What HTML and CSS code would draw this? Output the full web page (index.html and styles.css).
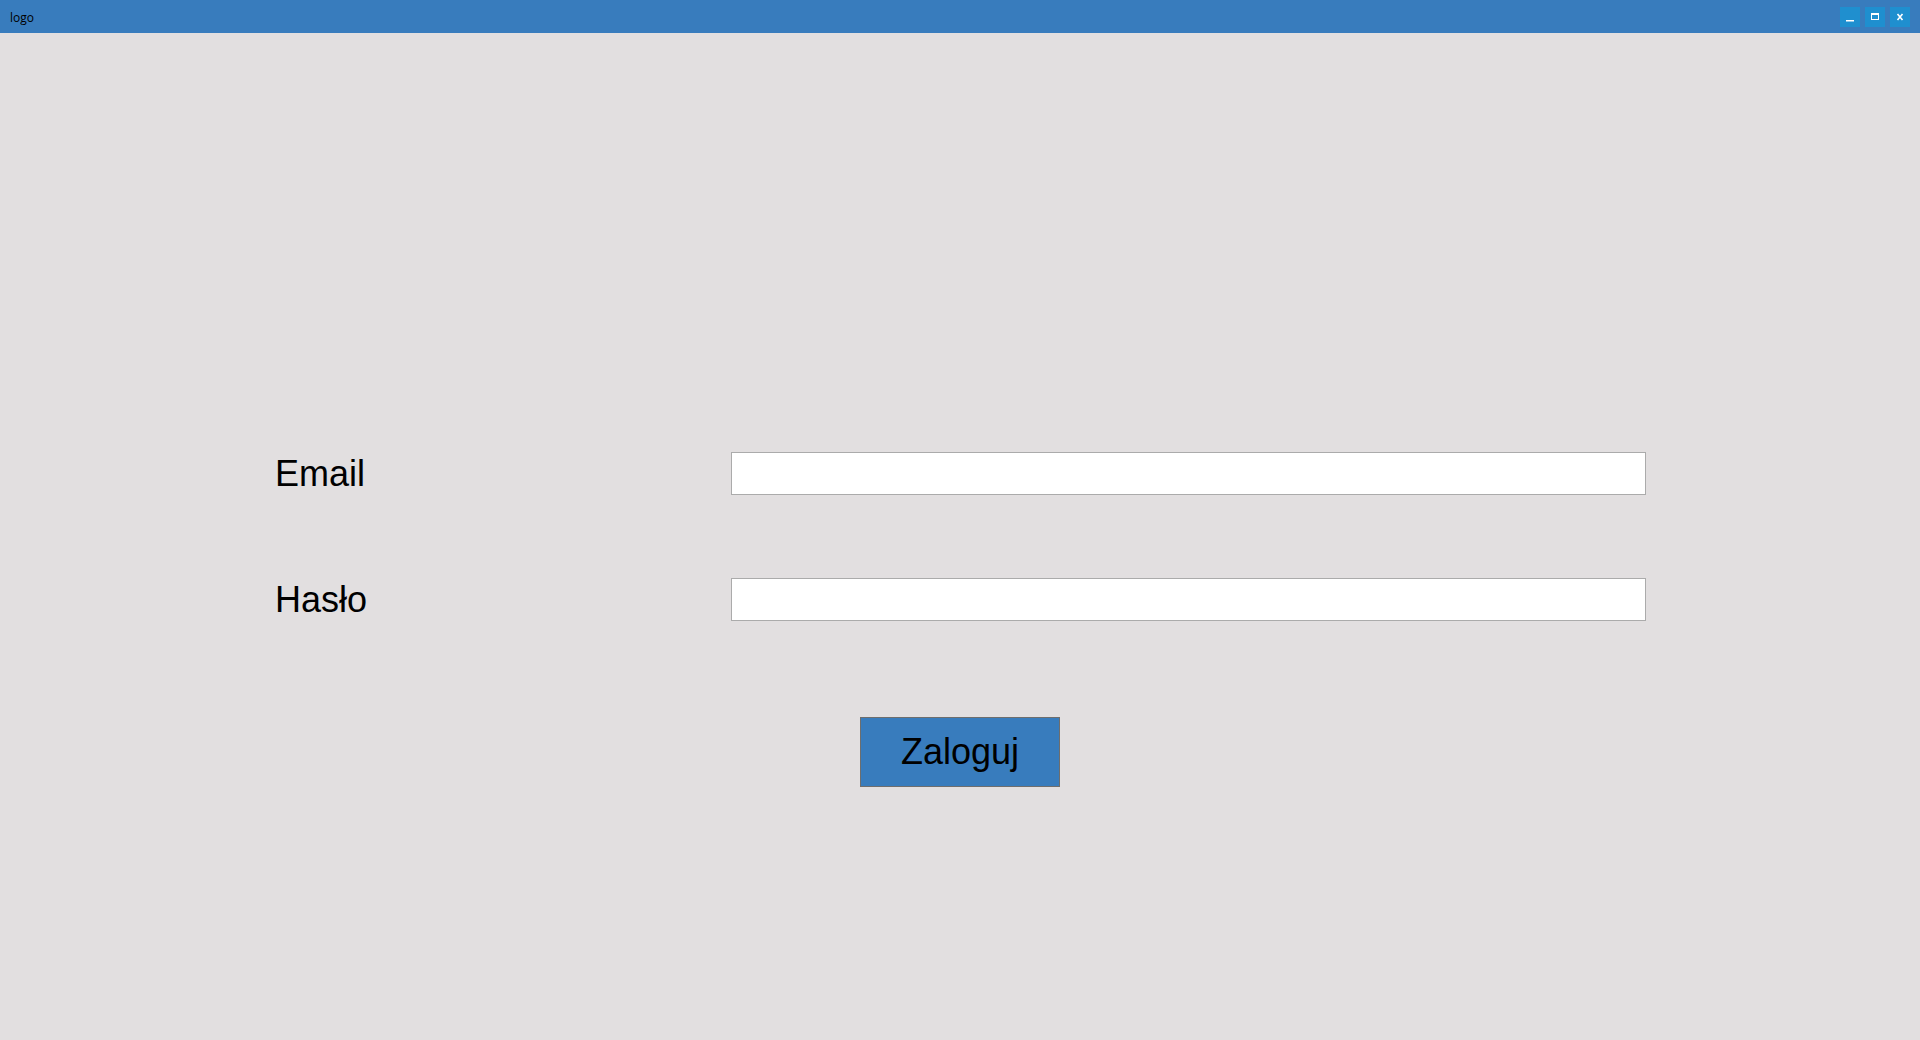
FILE: index.html
```html
<!DOCTYPE html>
<html lang="pl">
<head>
<meta charset="utf-8">
<title>logo</title>
<link rel="stylesheet" href="styles.css">
</head>
<body>
<div class="window">
  <header class="titlebar">
    <span class="title">logo</span>
    <div class="controls">
      <button class="ctl" aria-label="minimize">
        <svg width="20" height="20" viewBox="0 0 20 20"><rect x="6" y="13" width="8" height="1.5" fill="#fff"/></svg>
      </button>
      <button class="ctl" aria-label="maximize">
        <svg width="20" height="20" viewBox="0 0 20 20"><rect x="6.5" y="6.5" width="7" height="6" fill="none" stroke="#fff" stroke-width="1"/><rect x="6" y="6" width="8" height="2" fill="#fff"/></svg>
      </button>
      <button class="ctl" aria-label="close">
        <svg width="20" height="20" viewBox="0 0 20 20"><path d="M7.5 7 L12.5 13 M12.5 7 L7.5 13" stroke="#fff" stroke-width="1.6" fill="none"/></svg>
      </button>
    </div>
  </header>
  <main class="content">
    <form class="login">
      <div class="fields">
        <label class="label" for="email">Email</label>
        <input class="input" id="email" type="text">
        <label class="label" for="haslo">Hasło</label>
        <input class="input" id="haslo" type="password">
      </div>
      <div class="actions">
        <button type="button" class="submit">Zaloguj</button>
      </div>
    </form>
  </main>
</div>
</body>
</html>
```
FILE: styles.css
```css
html, body {
  margin: 0;
  padding: 0;
  height: 100%;
}
body {
  background: #e2dfe0;
  font-family: "Liberation Sans", Arial, sans-serif;
  overflow: hidden;
}
.window {
  display: flex;
  flex-direction: column;
  height: 100%;
}
.titlebar {
  height: 33px;
  background: #387cbd;
  display: flex;
  align-items: center;
  justify-content: space-between;
  flex-shrink: 0;
}
.title {
  font-family: "Open Sans", "Noto Sans", sans-serif;
  font-size: 12px;
  color: #000;
  padding-left: 10px;
  padding-top: 1px;
}
.controls {
  display: flex;
  gap: 5px;
  padding-right: 10px;
}
.ctl {
  width: 20px;
  height: 20px;
  padding: 0;
  margin: 0;
  border: none;
  background: #1f8fcf;
  display: block;
}
.ctl svg {
  display: block;
}
.content {
  flex: 1;
  padding-top: 419px;
}
.login {
  display: flex;
  flex-direction: column;
}
.fields {
  display: grid;
  grid-template-columns: 456px 915px;
  row-gap: 83px;
  align-items: center;
  padding-left: 275px;
}
.label {
  font-size: 36px;
  color: #000;
  line-height: 43px;
}
.input {
  box-sizing: border-box;
  width: 915px;
  height: 43px;
  margin: 0;
  border: 1px solid #ababab;
  background: #fff;
  padding: 0 6px;
  font-size: 20px;
  outline: none;
}
.actions {
  display: flex;
  justify-content: center;
  padding-top: 96px;
}
.submit {
  box-sizing: border-box;
  width: 200px;
  height: 70px;
  background: #387cbd;
  border: 1px solid #6e6e6e;
  color: #000;
  font-family: "Liberation Sans", Arial, sans-serif;
  font-size: 36px;
  padding: 0;
  margin: 0;
}
```
